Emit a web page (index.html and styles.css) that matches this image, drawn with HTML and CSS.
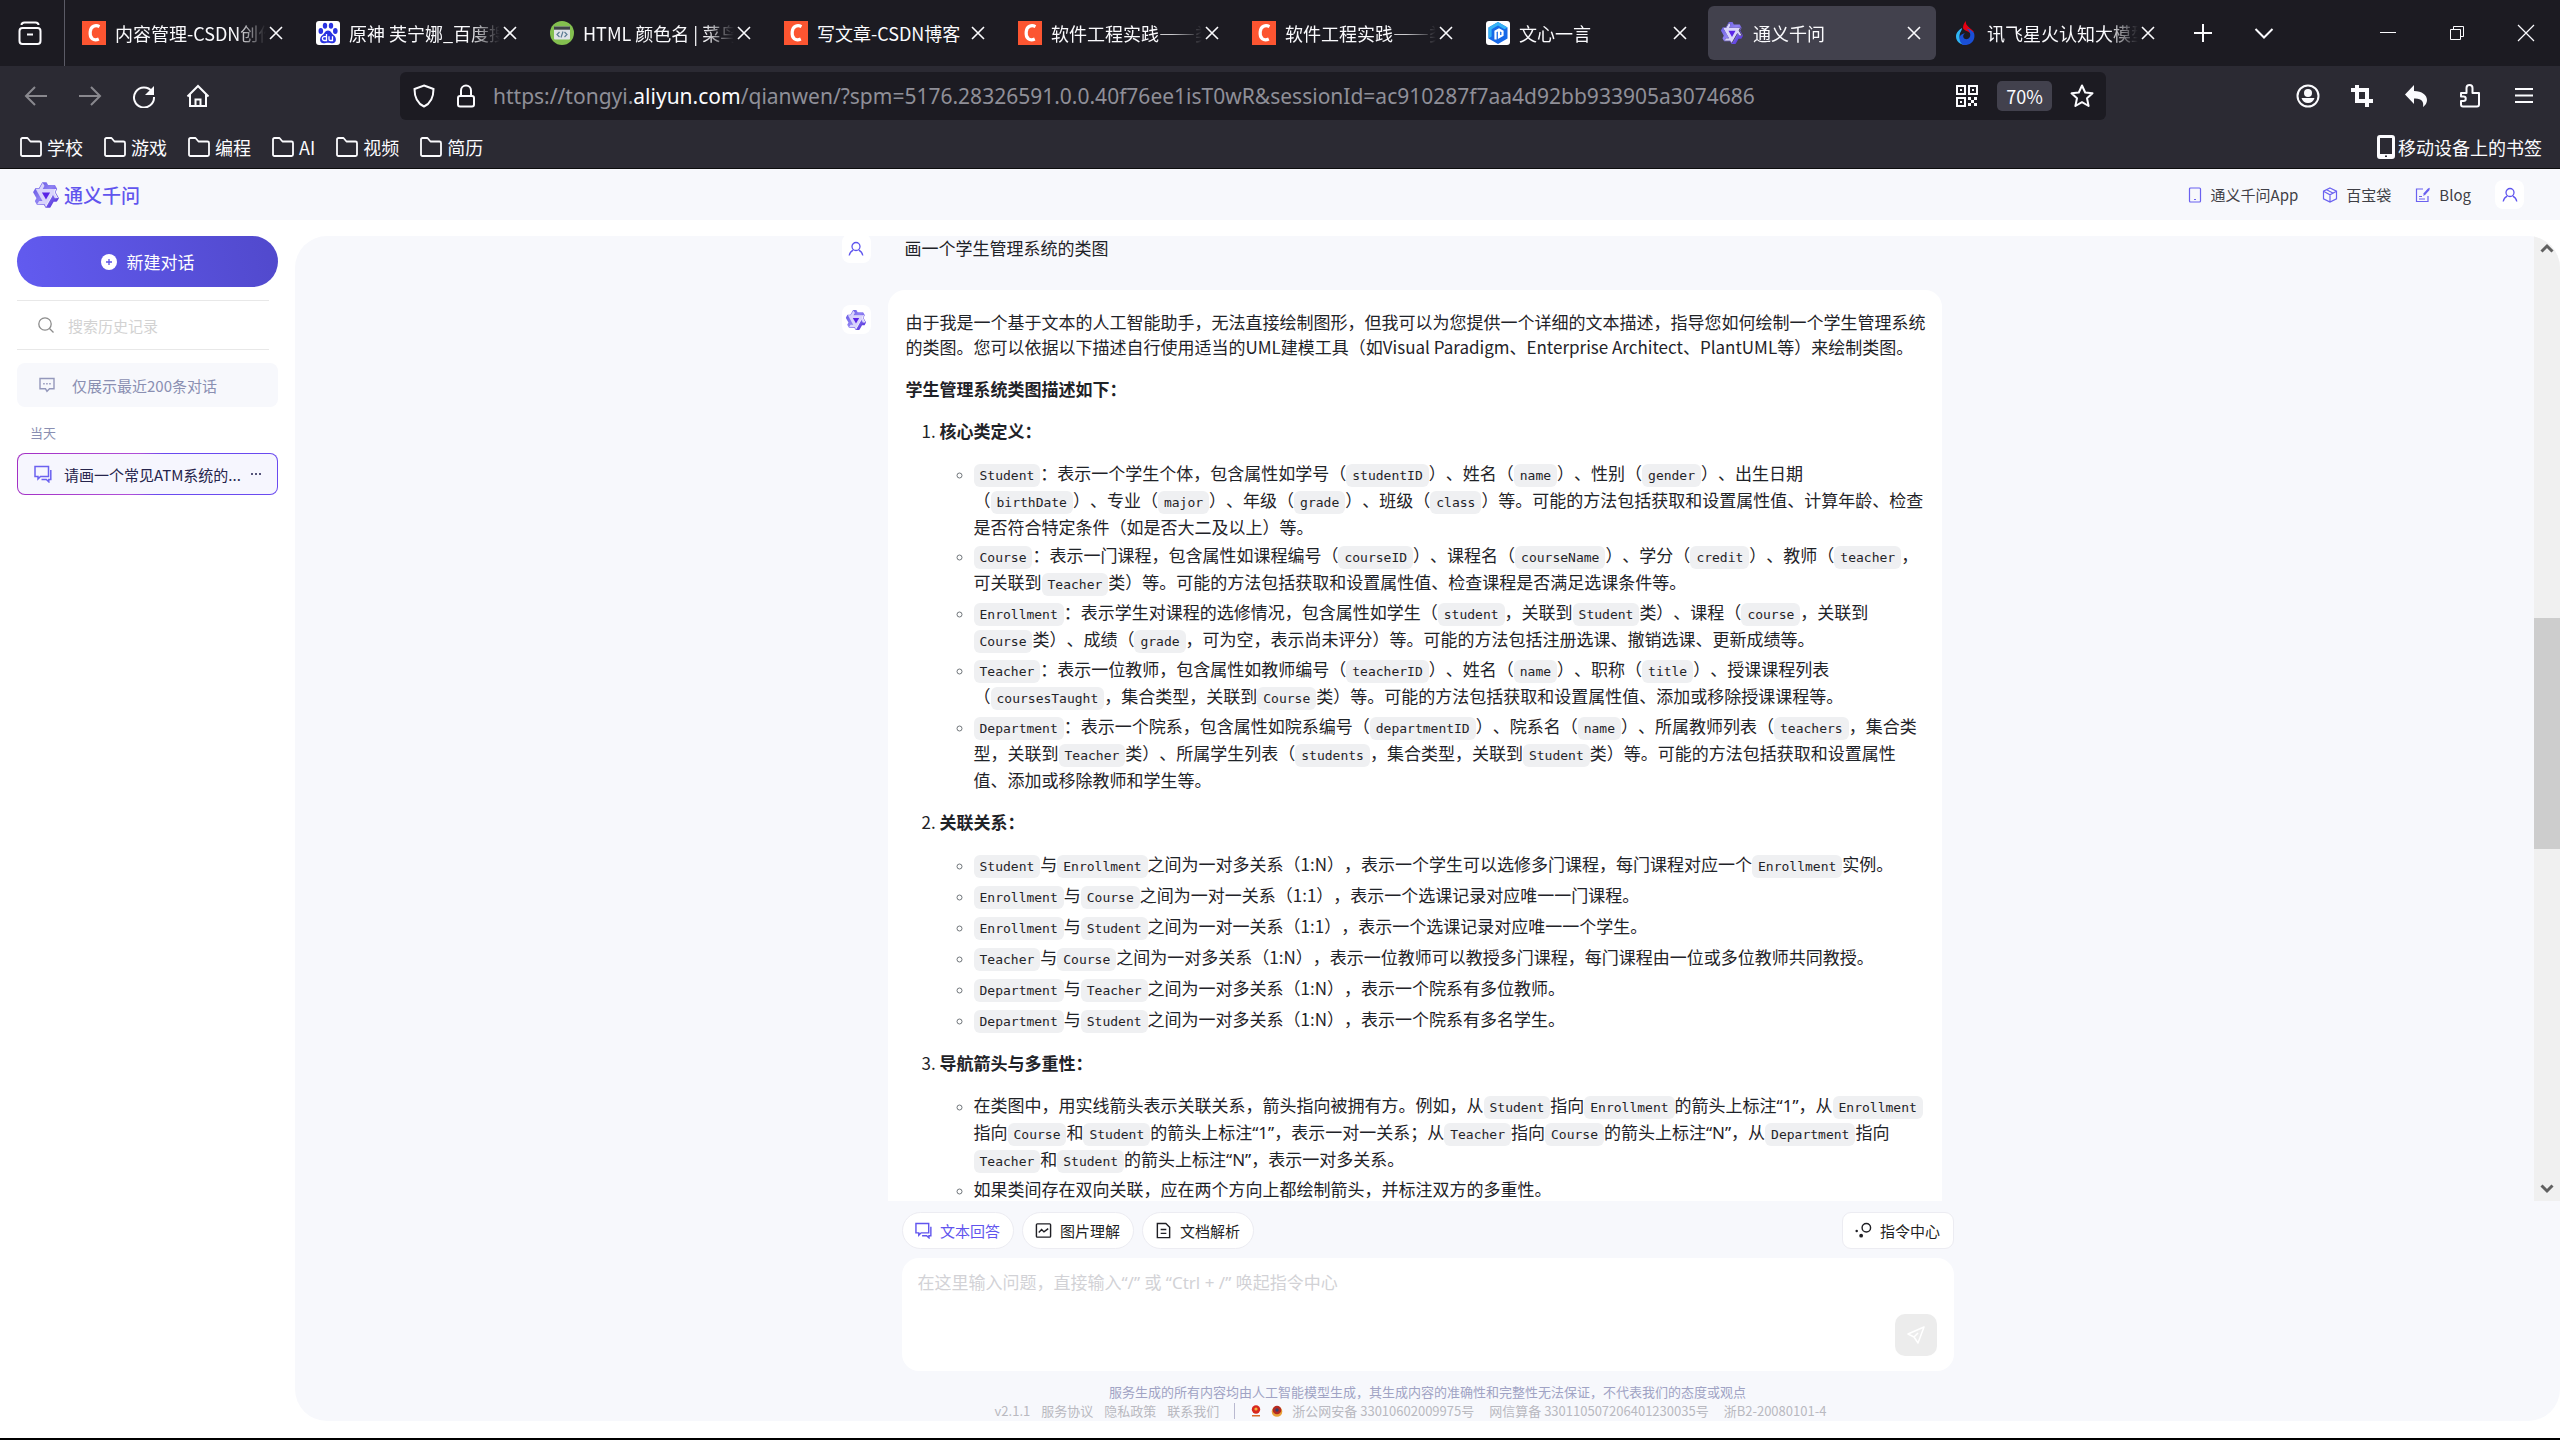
FILE: index.html
```html
<!DOCTYPE html>
<html lang="zh-CN">
<head>
<meta charset="utf-8">
<title>通义千问</title>
<link rel="stylesheet" href="styles.css">
</head>
<body>
<svg class="sprite" aria-hidden="true">
  <defs>
    <linearGradient id="brand" x1="0" y1="0" x2="1" y2="1"><stop offset="0" stop-color="#5a4be0"/><stop offset=".45" stop-color="#8f82f2"/><stop offset="1" stop-color="#4a22d8"/></linearGradient>
  </defs>
  <symbol id="i-qwen" viewBox="0 0 24 24"><path fill="#d9d4fb" d="M3 6.8h3.2L9.200 1.700l1.400 2.500L9.100 6.800h11l-1.500 2.600 3 5.200h-2.800l-1.500-2.600-5.800 10.100-1.400-2.400H4.400l1.500-2.500h3z"/><path fill="url(#brand)" fill-rule="evenodd" d="M12.604 1.34c.393.69.784 1.382 1.174 2.075a.18.18 0 00.157.091h5.552c.174 0 .322.11.446.327l1.454 2.57c.19.337.24.478.024.837-.26.43-.513.864-.76 1.3l-.367.658c-.106.196-.223.28-.04.512l2.652 4.637c.172.301.111.494-.043.77-.437.785-.882 1.564-1.335 2.34-.159.272-.352.375-.68.37-.777-.016-1.552-.01-2.327.016a.099.099 0 00-.081.05 575.097 575.097 0 01-2.705 4.74c-.169.293-.38.363-.725.364-.997.003-2.002.004-3.017.002a.537.537 0 01-.465-.271l-1.335-2.323a.09.09 0 00-.083-.049H4.982c-.285.03-.553-.001-.805-.092l-1.603-2.77a.543.543 0 01-.002-.54l1.207-2.12a.198.198 0 000-.197 550.951 550.951 0 01-1.875-3.272l-.79-1.395c-.16-.31-.173-.496.095-.965.465-.813.927-1.625 1.387-2.436.132-.234.304-.334.584-.335a338.3 338.3 0 012.589-.001.124.124 0 00.107-.063l2.806-4.895a.488.488 0 01.422-.246c.524-.001 1.053 0 1.583-.006L11.704 1c.341-.003.724.032.9.34zm-3.432.403a.06.06 0 00-.052.03L6.254 6.788a.157.157 0 01-.135.078H3.253c-.056 0-.07.025-.041.074l5.81 10.156c.025.042.013.062-.034.063l-2.795.015a.218.218 0 00-.2.116l-1.32 2.31c-.044.078-.021.118.068.118l5.716.008c.046 0 .08.02.104.061l1.403 2.454c.046.081.092.082.139 0l5.006-8.76.783-1.382a.055.055 0 01.096 0l1.424 2.53a.122.122 0 00.107.062l2.763-.02a.04.04 0 00.035-.02.041.041 0 000-.04l-2.9-5.086a.108.108 0 010-.113l.293-.507 1.12-1.977c.024-.041.012-.062-.035-.062H9.2c-.059 0-.073-.026-.043-.077l1.434-2.505a.107.107 0 000-.114L9.225 1.774a.06.06 0 00-.053-.031z"/><path fill="#5a24e6" d="M8.500 9.800h7L12 15.900z"/></symbol>
  <symbol id="i-csdn" viewBox="0 0 24 24"><path fill="#fc5531" d="M0 0h24v24H0z"/><path fill="none" stroke="#fff" stroke-width="3.200" d="M17.500 5.600c-4-2-8.700-.6-9.300 5.200-.7 6.500 3.400 9.600 8.600 7.200"/></symbol>
  <symbol id="i-baidu" viewBox="0 0 24 24"><rect width="24" height="24" rx="3" fill="#fff"/><g fill="#2932e1"><ellipse cx="4.800" cy="10" rx="2.300" ry="3"/><ellipse cx="9" cy="4.800" rx="2.200" ry="3"/><ellipse cx="15" cy="4.800" rx="2.200" ry="3"/><ellipse cx="19.300" cy="10" rx="2.300" ry="3"/><path d="M12 9.500c3 0 3.500 3 5.500 4.500 3.500 2.600 3.300 8-1 8.200-1.800 0-3-.5-4.500-.5s-2.700.5-4.500.5c-4.300-.2-4.500-5.600-1-8.200 2-1.500 2.500-4.500 5.500-4.500z"/></g><path fill="none" stroke="#fff" stroke-width="1.300" d="M10.500 13v6.500H8.300a1.700 1.700 0 010-3.800h2.200M13 15.300v3q0 1.200 1.300 1.200h2.200v-4.200"/></symbol>
  <symbol id="i-runoob" viewBox="0 0 24 24"><circle cx="12" cy="12" r="12" fill="#83bf4f"/><rect x="4" y="5.500" width="16" height="13" rx="1" fill="#e0e3e8"/><path fill="#3e4347" d="M4 5.500h16v3.200H4z"/><path fill="none" stroke="#5d7c94" stroke-width="1.200" d="M9.500 11L7 13.500 9.500 16M14.500 11l2.500 2.500-2.500 2.500M13 10.500l-2 6"/></symbol>
  <symbol id="i-wenxin" viewBox="0 0 24 24"><rect width="24" height="24" rx="3" fill="#fff"/><path fill="#1769e8" d="M12 1l9.500 5.500v11L12 23l-9.500-5.500v-11z"/><path fill="#35b4f5" d="M12 1l9.500 5.500-3 1.800L12 4.600 5.600 8.300v7.300l-3.100 1.900v-11z"/><path fill="none" stroke="#fff" stroke-width="2.200" d="M9.500 18.500v-8l3.500-2 3.500 2v3.700l-3.500 2V10"/></symbol>
  <symbol id="i-spark" viewBox="0 0 24 24"><path fill="#e60012" d="M12 0c-1 5 4 6 8 11l-3 2c-2-3-7-3-8-6 0-3 1-5 3-7z"/><path fill="#2fb5f3" d="M8 7c0 3-2.500 4-2.500 8.500C5.500 20 9 22 12 24 6 24 2 20 2 15.500 2 11.500 5 9 8 7z"/><path fill="#1a4fd6" d="M9 24c8 1 13-5 11-12-2.500-3-5-4-7.500-4.500 4 3 4.500 6.500 3 9-1.500 2.300-5 2.300-6 0-.7-1.800 0-3.200 1.500-4-3.500 0-5.500 2.500-5.500 5 0 3 1.500 5 3.500 6.500z"/></symbol>
  <symbol id="i-x" viewBox="0 0 16 16"><path fill="none" stroke="currentColor" stroke-width="1.600" d="M2 2l12 12M14 2L2 14"/></symbol>
  <symbol id="i-folder" viewBox="0 0 24 24"><path fill="none" stroke="currentColor" stroke-width="1.800" stroke-linejoin="round" d="M2 19.500v-15Q2 3 3.500 3h5l3 3.500h9Q22 6.500 22 8v11.500q0 1.500-1.500 1.500h-17Q2 21 2 19.500z"/></symbol>
  <symbol id="i-user" viewBox="0 0 16 16"><g fill="none" stroke="#5f55ee" stroke-width="1.300"><circle cx="8" cy="5.500" r="4"/><path d="M1.200 14.500q.7-3.800 4-5.400M14.800 14.500q-.7-3.800-4-5.400"/></g></symbol>
  <symbol id="i-chats" viewBox="0 0 18 18"><path fill="none" stroke="currentColor" stroke-width="1.500" d="M1 1.500h13.500v10H6.500L4 14v-2.500H1zM16.800 5v9.500h-2v2.300l-2.500-2.300H7.500"/></symbol>
</svg>

<header class="browser">
  <div class="tabstrip">
    <button class="view-btn" aria-label="Firefox View"><svg width="24" height="24" viewBox="0 0 24 24" fill="none" stroke="#fbfbfe" stroke-width="2"><rect x="1.500" y="7" width="21" height="16" rx="3"/><path d="M3.500 4q0-2.500 3-2.500h11q3 0 3 2.500M9 13.500h6"/></svg></button>
    <div class="tabs">
      <div class="tab"><svg class="fav"><use href="#i-csdn"/></svg><a class="tab-title" href="#">内容管理-CSDN创作中心</a><button class="tab-x" aria-label="关闭"><svg><use href="#i-x"/></svg></button></div>
      <div class="tab"><svg class="fav"><use href="#i-baidu"/></svg><a class="tab-title" href="#">原神 芙宁娜_百度搜索</a><button class="tab-x" aria-label="关闭"><svg><use href="#i-x"/></svg></button></div>
      <div class="tab"><svg class="fav"><use href="#i-runoob"/></svg><a class="tab-title" href="#">HTML 颜色名 | 菜鸟教程</a><button class="tab-x" aria-label="关闭"><svg><use href="#i-x"/></svg></button></div>
      <div class="tab"><svg class="fav"><use href="#i-csdn"/></svg><a class="tab-title fits" href="#">写文章-CSDN博客</a><button class="tab-x" aria-label="关闭"><svg><use href="#i-x"/></svg></button></div>
      <div class="tab"><svg class="fav"><use href="#i-csdn"/></svg><a class="tab-title" href="#">软件工程实践——类图</a><button class="tab-x" aria-label="关闭"><svg><use href="#i-x"/></svg></button></div>
      <div class="tab"><svg class="fav"><use href="#i-csdn"/></svg><a class="tab-title" href="#">软件工程实践——类图</a><button class="tab-x" aria-label="关闭"><svg><use href="#i-x"/></svg></button></div>
      <div class="tab"><svg class="fav"><use href="#i-wenxin"/></svg><a class="tab-title" href="#">文心一言</a><button class="tab-x" aria-label="关闭"><svg><use href="#i-x"/></svg></button></div>
      <div class="tab active"><svg class="fav"><use href="#i-qwen"/></svg><a class="tab-title" href="#">通义千问</a><button class="tab-x" aria-label="关闭"><svg><use href="#i-x"/></svg></button></div>
      <div class="tab"><svg class="fav"><use href="#i-spark"/></svg><a class="tab-title" href="#">讯飞星火认知大模型</a><button class="tab-x" aria-label="关闭"><svg><use href="#i-x"/></svg></button></div>
    </div>
    <div class="tab-tools">
      <button class="strip-btn" aria-label="新建标签页"><svg width="20" height="20" viewBox="0 0 20 20" stroke="#fbfbfe" stroke-width="2"><path d="M10 1v18M1 10h18"/></svg></button>
      <button class="strip-btn" aria-label="列出所有标签页"><svg width="20" height="20" viewBox="0 0 20 20" fill="none" stroke="#fbfbfe" stroke-width="2"><path d="M1.500 6l8.500 8.500L18.500 6"/></svg></button>
    </div>
    <div class="win-tools">
      <button class="win-btn" aria-label="最小化"><svg width="16" height="16" viewBox="0 0 16 16" stroke="#fbfbfe"><path d="M0 7.500h16"/></svg></button>
      <button class="win-btn" aria-label="还原"><svg width="16" height="16" viewBox="0 0 16 16" fill="none" stroke="#fbfbfe"><path d="M1.500 4.500h10v10h-10zM4.500 4.500v-3h10v10h-3"/></svg></button>
      <button class="win-btn" aria-label="关闭窗口"><svg width="18" height="18" viewBox="0 0 18 18" stroke="#fbfbfe" stroke-width="1.200"><path d="M1 1l16 16M17 1L1 17"/></svg></button>
    </div>
  </div>

  <div class="toolbar">
    <button class="tool-btn dim" aria-label="后退"><svg viewBox="0 0 24 24"><path d="M23 12H2M11 3l-9 9 9 9"/></svg></button>
    <button class="tool-btn dim" aria-label="前进"><svg viewBox="0 0 24 24"><path d="M1 12h21M13 3l9 9-9 9"/></svg></button>
    <button class="tool-btn" aria-label="刷新"><svg viewBox="0 0 24 24"><path d="M20 7.500A10 10 0 1 0 22 13"/><path class="solid" d="M22 2v9h-9z"/></svg></button>
    <button class="tool-btn" aria-label="主页"><svg viewBox="0 0 24 24"><path d="M1.500 12.500L12 2l10.500 10.500M4 10.500V22h16V10.500M9.500 22v-6.500h5V22"/></svg></button>
    <div class="urlbar">
      <button class="url-btn" aria-label="跟踪保护"><svg viewBox="0 0 24 24"><path d="M12 1.500l9.500 3.500c0 8-3 14.500-9.500 17.500C5.500 19.500 2.500 13 2.500 5z"/></svg></button>
      <button class="url-btn" aria-label="网站信息"><svg viewBox="0 0 24 24"><path d="M7 12V6.500a5 5 0 0 1 10 0V12"/><rect x="4" y="12" width="16" height="10.500" rx="2"/></svg></button>
      <a class="url" href="#">https://tongyi.<span>aliyun.com</span>/qianwen/?spm=5176.28326591.0.0.40f76ee1isT0wR&amp;sessionId=ac910287f7aa4d92bb933905a3074686</a>
      <button class="url-btn" aria-label="二维码"><svg viewBox="0 0 24 24"><path d="M2 2h8v8H2zM14 2h8v8h-8zM2 14h8v8H2z"/><path class="solid" d="M5 5h2v2H5zM17 5h2v2h-2zM5 17h2v2H5zM13 13h3v3h-3zM19 13h3v3h-3zM16 16h3v3h-3zM13 19h3v3h-3zM19 19h3v3h-3z"/></svg></button>
      <button class="zoom">70%</button>
      <button class="url-btn star" aria-label="收藏"><svg viewBox="0 0 24 24"><path stroke-linejoin="round" d="M12 1.500l3.200 7 7.300.8-5.500 5 1.600 7.700-6.600-3.800L5.400 22 7 14.300l-5.500-5 7.300-.8z"/></svg></button>
    </div>
    <button class="tool-btn" aria-label="账户"><svg viewBox="0 0 24 24"><circle cx="12" cy="12" r="10.500"/><circle class="solid" cx="12" cy="9" r="4"/><path class="solid" d="M5.500 14h13q-1.500 5-6.500 5t-6.500-5z"/></svg></button>
    <button class="tool-btn" aria-label="截图"><svg viewBox="0 0 24 24"><path stroke-width="4" d="M7 1v16h16M1 6h16v17"/></svg></button>
    <button class="tool-btn" aria-label="撤销"><svg viewBox="0 0 24 24"><path class="solid" d="M10 1v6c8 0 13 4 13 9 0 3-1.500 5-4 7 1-5-1-9-9-8.500V20L1 10.500z"/></svg></button>
    <button class="tool-btn" aria-label="扩展"><svg viewBox="0 0 24 24"><path stroke-linejoin="round" d="M3 9h5.500V4a3 3 0 0 1 6 0v5H21v11.500q0 2-2 2H5q-2 0-2-2V17h2.500a2 2 0 0 0 0-4.500H3z"/></svg></button>
    <button class="tool-btn" aria-label="菜单"><svg viewBox="0 0 24 24"><path d="M3 5h18M3 11.500h18M3 18h18"/></svg></button>
  </div>

  <nav class="bookmarks">
    <a href="#"><svg><use href="#i-folder"/></svg>学校</a>
    <a href="#"><svg><use href="#i-folder"/></svg>游戏</a>
    <a href="#"><svg><use href="#i-folder"/></svg>编程</a>
    <a href="#"><svg><use href="#i-folder"/></svg>AI</a>
    <a href="#"><svg><use href="#i-folder"/></svg>视频</a>
    <a href="#"><svg><use href="#i-folder"/></svg>简历</a>
    <a class="mobile" href="#"><svg viewBox="0 0 24 24"><path fill="#fbfbfe" fill-rule="evenodd" d="M6 0h12q3 0 3 3v18q0 3-3 3H6q-3 0-3-3V3q0-3 3-3zm0 3v16h12V3zm5 17.500V22h2v-1.500z"/></svg>移动设备上的书签</a>
  </nav>
</header>

<div class="app-head">
  <a class="brand" href="#"><svg width="28" height="28"><use href="#i-qwen"/></svg>通义千问</a>
  <nav class="app-nav">
    <a href="#"><svg viewBox="0 0 16 16"><rect x="2.500" y="1" width="11" height="14" rx="1"/><path d="M7 12.500h2"/></svg>通义千问App</a>
    <a href="#"><svg viewBox="0 0 16 16"><path d="M8 1l6.500 3.200v7.600L8 15l-6.500-3.200V4.200zM1.500 4.200L8 7.800l6.500-3.600M8 7.800V15M4.700 2.700l6.500 3.500"/></svg>百宝袋</a>
    <a href="#"><svg viewBox="0 0 16 16"><path d="M8 2H1.500v12.500H13V9M4 12h6M4 9.500h3M8.500 8.500L14.500 1"/><path stroke-width="2.200" d="M9 7.500l5-5.500"/></svg>Blog</a>
    <button class="tile" aria-label="用户"><svg><use href="#i-user"/></svg></button>
  </nav>
</div>

<div class="app">
  <aside class="side">
    <button class="new-chat"><svg width="16" height="16" viewBox="0 0 16 16"><circle cx="8" cy="8" r="8" fill="#fff"/><path stroke="#5b52e4" stroke-width="1.300" d="M8 5v6M5 8h6"/></svg>新建对话</button>
    <label class="search"><svg width="16" height="16" viewBox="0 0 16 16" fill="none" stroke="#8c8c8c" stroke-width="1.300"><circle cx="7" cy="7" r="6.200"/><path d="M11.500 11.500l4 4"/></svg><input type="text" placeholder="搜索历史记录" aria-label="搜索历史记录"></label>
    <p class="notice"><svg width="16" height="16" viewBox="0 0 16 16" fill="none" stroke="#9498bb" stroke-width="1.400"><path d="M1 1.500h14v10.300h-4.500L8 14.300l-1.500-2.500H1z"/><path stroke-dasharray="1.500 1.500" d="M4.200 6.700h8"/></svg>仅展示最近200条对话</p>
    <h2 class="day">当天</h2>
    <a class="history" href="#"><svg width="18" height="18"><use href="#i-chats"/></svg><span>请画一个常见ATM系统的...</span><i class="dots"></i></a>
  </aside>

  <main class="main">
    <div class="viewport">
      <div class="log">
        <section class="msg user">
          <span class="tile"><svg><use href="#i-user"/></svg></span>
          <p>画一个学生管理系统的类图</p>
        </section>
        <section class="msg bot">
          <span class="tile"><svg class="q"><use href="#i-qwen"/></svg></span>
          <article class="bubble">
            <p>由于我是一个基于文本的人工智能助手，无法直接绘制图形，但我可以为您提供一个详细的文本描述，指导您如何绘制一个学生管理系统<br>的类图。您可以依据以下描述自行使用适当的UML建模工具（如Visual Paradigm、Enterprise Architect、PlantUML等）来绘制类图。</p>
            <p><strong>学生管理系统类图描述如下：</strong></p>
            <ol>
              <li><p><strong>核心类定义：</strong></p>
                <ul>
                  <li><code>Student</code>：表示一个学生个体，包含属性如学号（<code>studentID</code>）、姓名（<code>name</code>）、性别（<code>gender</code>）、出生日期<br>（<code>birthDate</code>）、专业（<code>major</code>）、年级（<code>grade</code>）、班级（<code>class</code>）等。可能的方法包括获取和设置属性值、计算年龄、检查<br>是否符合特定条件（如是否大二及以上）等。</li>
                  <li><code>Course</code>：表示一门课程，包含属性如课程编号（<code>courseID</code>）、课程名（<code>courseName</code>）、学分（<code>credit</code>）、教师（<code>teacher</code>，<br>可关联到<code>Teacher</code>类）等。可能的方法包括获取和设置属性值、检查课程是否满足选课条件等。</li>
                  <li><code>Enrollment</code>：表示学生对课程的选修情况，包含属性如学生（<code>student</code>，关联到<code>Student</code>类）、课程（<code>course</code>，关联到<br><code>Course</code>类）、成绩（<code>grade</code>，可为空，表示尚未评分）等。可能的方法包括注册选课、撤销选课、更新成绩等。</li>
                  <li><code>Teacher</code>：表示一位教师，包含属性如教师编号（<code>teacherID</code>）、姓名（<code>name</code>）、职称（<code>title</code>）、授课课程列表<br>（<code>coursesTaught</code>，集合类型，关联到<code>Course</code>类）等。可能的方法包括获取和设置属性值、添加或移除授课课程等。</li>
                  <li><code>Department</code>：表示一个院系，包含属性如院系编号（<code>departmentID</code>）、院系名（<code>name</code>）、所属教师列表（<code>teachers</code>，集合类<br>型，关联到<code>Teacher</code>类）、所属学生列表（<code>students</code>，集合类型，关联到<code>Student</code>类）等。可能的方法包括获取和设置属性<br>值、添加或移除教师和学生等。</li>
                </ul>
              </li>
              <li><p><strong>关联关系：</strong></p>
                <ul class="relations">
                  <li><code>Student</code>与<code>Enrollment</code>之间为一对多关系（1:N），表示一个学生可以选修多门课程，每门课程对应一个<code>Enrollment</code>实例。</li>
                  <li><code>Enrollment</code>与<code>Course</code>之间为一对一关系（1:1），表示一个选课记录对应唯一一门课程。</li>
                  <li><code>Enrollment</code>与<code>Student</code>之间为一对一关系（1:1），表示一个选课记录对应唯一一个学生。</li>
                  <li><code>Teacher</code>与<code>Course</code>之间为一对多关系（1:N），表示一位教师可以教授多门课程，每门课程由一位或多位教师共同教授。</li>
                  <li><code>Department</code>与<code>Teacher</code>之间为一对多关系（1:N），表示一个院系有多位教师。</li>
                  <li><code>Department</code>与<code>Student</code>之间为一对多关系（1:N），表示一个院系有多名学生。</li>
                </ul>
              </li>
              <li><p><strong>导航箭头与多重性：</strong></p>
                <ul>
                  <li>在类图中，用实线箭头表示关联关系，箭头指向被拥有方。例如，从<code>Student</code>指向<code>Enrollment</code>的箭头上标注<span class="label">“1”</span>，从<code>Enrollment</code><br>指向<code>Course</code>和<code>Student</code>的箭头上标注<span class="label">“1”</span>，表示一对一关系；从<code>Teacher</code>指向<code>Course</code>的箭头上标注<span class="label">“N”</span>，从<code>Department</code>指向<br><code>Teacher</code>和<code>Student</code>的箭头上标注<span class="label">“N”</span>，表示一对多关系。</li>
                  <li>如果类间存在双向关联，应在两个方向上都绘制箭头，并标注双方的多重性。</li>
                </ul>
              </li>
            </ol>
          </article>
        </section>
      </div>
      <div class="scrollbar" aria-hidden="true">
        <svg viewBox="0 0 14 10"><path d="M1.500 8.500L7 3l5.500 5.500"/></svg>
        <div class="track"><div class="thumb"></div></div>
        <svg viewBox="0 0 14 10"><path d="M1.500 1.500L7 7l5.500-5.500"/></svg>
      </div>
    </div>

    <div class="composer">
      <div class="modes">
        <button class="mode on"><svg viewBox="0 0 18 18"><use href="#i-chats"/></svg>文本回答</button>
        <button class="mode"><svg viewBox="0 0 18 18"><rect x="1.500" y="2" width="15" height="14" rx="1"/><path d="M4 11l3-3 2.500 2.500L14 7"/></svg>图片理解</button>
        <button class="mode"><svg viewBox="0 0 18 18"><path d="M2.500 1.500h9l4 4v11h-13zM6 8h6M6 12h6"/></svg>文档解析</button>
        <button class="mode command"><svg viewBox="0 0 18 18"><circle cx="12" cy="6" r="4.500"/><circle class="dot" cx="6.500" cy="14.500" r="2"/><circle class="dot" cx="1.800" cy="9.500" r="1.300"/></svg>指令中心</button>
      </div>
      <div class="box">
        <textarea placeholder="在这里输入问题，直接输入“/” 或 “Ctrl + /” 唤起指令中心" aria-label="问题"></textarea>
        <button class="send" aria-label="发送"><svg width="20" height="20" viewBox="0 0 20 20" fill="none" stroke="#fff" stroke-width="1.500" stroke-linejoin="round"><path d="M18 2L2 9l6 3 4 6zM8 12l4-4"/></svg></button>
      </div>
      <p class="disclaimer">服务生成的所有内容均由人工智能模型生成，其生成内容的准确性和完整性无法保证，不代表我们的态度或观点</p>
      <footer class="foot">
        <span>v2.1.1</span><a href="#">服务协议</a><a href="#">隐私政策</a><a href="#">联系我们</a>
        <i class="bar"></i>
        <svg viewBox="0 0 12 12"><circle cx="6" cy="4.500" r="4.200" fill="#d8281e"/><circle cx="6" cy="4" r="1.600" fill="#f3b23c"/><path fill="#d86a2a" d="M2 10h8v1.500H2z"/></svg>
        <svg class="badge" viewBox="0 0 12 12"><circle cx="6" cy="6.500" r="5.300" fill="#e9a23b"/><circle cx="6" cy="5" r="4.300" fill="#b52a22"/><circle cx="6" cy="5" r="1.700" fill="#3a3f6b"/></svg>
        <a href="#">浙公网安备 33010602009975号</a><a class="wide" href="#">网信算备 330110507206401230035号</a><a class="wide" href="#">浙B2-20080101-4</a>
      </footer>
    </div>
  </main>
</div>
</body>
</html>
```
FILE: styles.css
```css
* { box-sizing: border-box; }
body {
  margin: 0;
  height: 100vh;
  display: flex;
  flex-direction: column;
  overflow: hidden;
  background: #fff;
  border-bottom: 2px solid #000;
  font-family: "Noto Sans CJK SC", sans-serif;
  text-spacing-trim: space-all;
  color: #1f2328;
}
p, h2, ol, ul { margin: 0; padding: 0; }
a { color: inherit; text-decoration: none; }
button { border: 0; padding: 0; margin: 0; background: none; font: inherit; color: inherit; display: flex; align-items: center; justify-content: center; }
svg { flex: none; display: block; }
.sprite { position: absolute; width: 0; height: 0; }

/* browser chrome */
.browser { background: #2b2a33; color: #fbfbfe; border-bottom: 1px solid #0c0c0d; font-size: 18px; }
.tabstrip { display: flex; height: 66px; background: #1c1b22; }
.view-btn { width: 65px; padding-right: 5px; border-right: 1px solid #5b5b66; }
.tabs { display: flex; gap: 6px; padding: 6px 0 6px 5px; }
.tab { width: 228px; display: flex; align-items: center; padding: 0 12px; border-radius: 6px; }
.tab.active { background: #42414d; }
.fav { width: 24px; height: 24px; margin-right: 9px; }
.tab-title { flex: 1; overflow: hidden; white-space: nowrap; mask-image: linear-gradient(to right, #000 80%, transparent); }
.tab-title.fits { mask-image: none; }
.tab-x { width: 20px; height: 22px; }
.tab-x svg { width: 16px; height: 16px; }
.tab-tools { display: flex; gap: 7px; margin-left: 6px; }
.strip-btn { width: 54px; }
.win-tools { display: flex; margin-left: auto; }
.win-btn { width: 69px; }

.toolbar { display: flex; height: 60px; padding: 6px 9px; }
.tool-btn { width: 54px; }
.tool-btn svg, .url-btn svg { width: 24px; height: 24px; fill: none; stroke: #fbfbfe; stroke-width: 2; }
.tool-btn .solid, .url-btn .solid { fill: #fbfbfe; stroke: none; }
.tool-btn.dim { opacity: .45; }
.urlbar { flex: 1; min-width: 0; display: flex; align-items: center; margin: 0 175px; padding: 0 3px; border-radius: 6px; background: #1c1b22; }
.url-btn { width: 42px; height: 42px; }
.url { flex: 1; min-width: 0; margin-left: 6px; overflow: hidden; white-space: nowrap; font-family: "Noto Sans", sans-serif; font-size: 21px; color: #8f8f98; }
.url span { color: #fbfbfe; }
.zoom { width: 55px; height: 30px; margin: 0 9px; border-radius: 5px; background: #42414d; }

.bookmarks { display: flex; gap: 20px; height: 42px; align-items: center; padding: 0 18px 0 19px; }
.bookmarks a { display: flex; align-items: center; gap: 4px; }
.bookmarks svg { width: 24px; height: 24px; }
.bookmarks .mobile { margin-left: auto; gap: 0; }

/* app header */
.app-head { display: flex; align-items: center; height: 51px; padding: 0 36px 0 32px; background: #f7f8fc; }
.brand { display: flex; align-items: center; gap: 4px; font-size: 19px; font-weight: 500; color: #6155ee; }
.app-nav { display: flex; align-items: center; gap: 24px; margin-left: auto; font-size: 15px; color: #3f3f46; }
.app-nav a { display: flex; align-items: center; gap: 8px; }
.app-nav a svg { width: 16px; height: 16px; fill: none; stroke: #6b61f0; stroke-width: 1.2; }
.tile { flex: none; width: 29px; height: 29px; border-radius: 8px; background: #fff; display: flex; align-items: center; justify-content: center; }
.tile svg { width: 16px; height: 16px; }
.tile svg.q { width: 22px; height: 22px; }

.app { flex: 1; min-height: 0; display: flex; gap: 17px; padding: 16px 0 17px 17px; }

/* sidebar */
.side { width: 261px; display: flex; flex-direction: column; }
.new-chat { height: 51px; gap: 10px; border-radius: 26px; background: linear-gradient(75deg, #625bf0, #5149cc); color: #fff; font-size: 17px; }
.search { display: flex; align-items: center; gap: 14px; height: 50px; margin: 13px 9px 0 0; padding-left: 21px; border: solid #e8e8e8; border-width: 1px 0; }
.search input { flex: 1; min-width: 0; border: 0; padding: 0; outline: 0; background: none; font: inherit; font-size: 15px; }
.search input::placeholder { color: #d2d2d2; opacity: 1; }
.notice { display: flex; align-items: center; gap: 17px; height: 44px; margin-top: 13px; padding-left: 22px; border-radius: 8px; background: #f7f8fc; font-size: 15px; color: #8a8fb2; }
.day { margin: 16px 0 10px 13px; font-size: 13px; line-height: 20px; font-weight: 400; color: #8a8fb2; }
.history { display: flex; align-items: center; height: 42px; padding: 0 16px; border: 1px solid transparent; border-radius: 8px; background: linear-gradient(#f6f6fe, #f6f6fe) padding-box, linear-gradient(100deg, #a32fc4, #b04fd8 45%, #6a4af0 55%, #6a4af0) border-box; font-size: 15px; color: #26244c; }
.history svg { color: #6b61f0; }
.history span { margin-left: 12px; white-space: nowrap; }
.dots { width: 10px; height: 2px; margin-left: auto; background: repeating-linear-gradient(to right, #55547a 0 2px, transparent 2px 4px); }

/* conversation */
.main { flex: 1; min-width: 0; display: flex; flex-direction: column; border-radius: 32px; overflow: hidden; background: #f7f8fc; }
.viewport { flex: 1; min-height: 0; display: flex; overflow: hidden; }
.log { width: 1146px; margin: -2px auto 0; font-size: 17px; line-height: 25px; }
.msg { display: flex; gap: 17px; padding-right: 46px; }
.msg.user { height: 56px; }
.msg.user p { padding-left: 17px; line-height: 27px; }
.msg.bot .tile { margin-top: 15px; }
.bubble { flex: 1; min-width: 0; padding: 19px 18px; border-radius: 17px; background: #fff; white-space: nowrap; }
.bubble > p { margin-bottom: 17px; }
.bubble ol { padding-left: 34px; }
.bubble ol > li + li { margin-top: 17px; }
.bubble ul { margin-top: 17px; padding-left: 34px; list-style: circle; }
.bubble ul li::marker { color: #70757a; font-size: 14px; }
.bubble ul li + li { margin-top: 3px; }
.bubble .relations li + li { margin-top: 4px; }
.bubble code { padding: 4px 6px; border-radius: 6px; background: #eff0f2; font-family: "DejaVu Sans Mono", monospace; font-size: 13px; line-height: 23px; }
.bubble .label { font-family: "Noto Sans", "Noto Sans CJK SC", sans-serif; line-height: 17px; }

.scrollbar { width: 26px; display: flex; flex-direction: column; align-items: center; background: #f0f0f0; }
.scrollbar svg { width: 14px; height: 10px; margin: 7px 0; fill: none; stroke: #606060; stroke-width: 3; }
.track { flex: 1; width: 100%; display: flex; flex-direction: column; }
.track::before { content: ""; flex: 358; }
.track::after { content: ""; flex: 328; }
.thumb { flex: 231; background: #cdcdcd; }

/* composer */
.composer { width: 1052px; margin: 0 auto; padding-top: 11px; }
.modes { display: flex; gap: 8px; }
.mode { width: 112px; height: 37px; gap: 8px; border: 1px solid #ececf2; border-radius: 19px; background: #fff; font-size: 15px; color: #1f1f24; }
.mode svg { width: 17px; height: 17px; fill: none; stroke: currentColor; stroke-width: 1.5; }
.mode .dot { fill: currentColor; stroke: none; }
.mode.on { color: #6155ee; }
.mode.command { margin-left: auto; border-radius: 9px; }
.box { display: flex; align-items: flex-end; height: 113px; margin-top: 9px; padding: 12px 17px 15px 16px; border-radius: 17px; background: #fff; }
.box textarea { flex: 1; align-self: stretch; border: 0; outline: 0; padding: 0; resize: none; background: none; font-family: "Noto Sans", "Noto Sans CJK SC", sans-serif; font-size: 17px; line-height: 25px; }
.box textarea::placeholder { color: #d2d2d6; opacity: 1; }
.send { width: 42px; height: 42px; border-radius: 10px; background: #ececec; }
.disclaimer { margin-top: 11px; text-align: center; font-size: 13px; line-height: 19px; color: #a0a3c4; }
.foot { display: flex; align-items: center; justify-content: center; gap: 11px; padding: 0 34px 1px 0; font-size: 13px; line-height: 19px; color: #b9b9c0; }
.foot svg { width: 12px; height: 12px; }
.foot .badge { margin: 0 -2px; }
.foot .wide { margin-left: 4px; }
.bar { width: 1px; height: 16px; margin: 0 4px; background: #b9b9d0; }
```
